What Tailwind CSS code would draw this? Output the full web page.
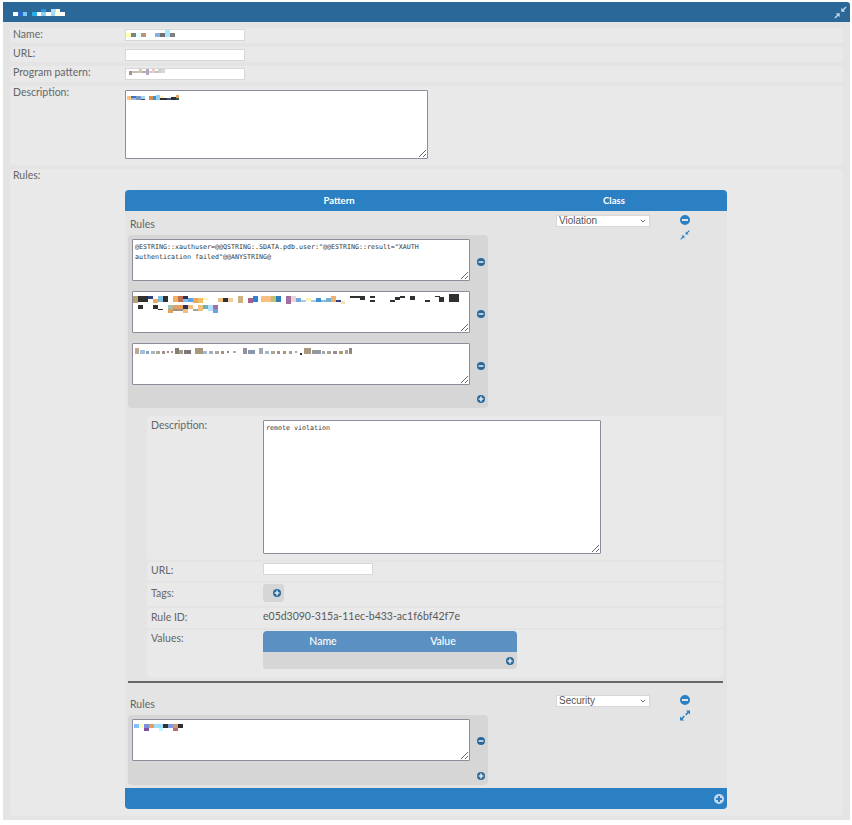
<!DOCTYPE html>
<html lang="en">
<head>
    <meta charset="UTF-8">
    <meta name="viewport" content="width=device-width, initial-scale=1.0">
    <script src="https://cdn.jsdelivr.net/npm/@tailwindcss/browser@4"></script>
    <title>Rule editor</title>
</head>
<body class="bg-white font-['Lato','Open_Sans',sans-serif] text-[10.5px] leading-[13px] text-[#666]">
    <div class="mt-[2px] ml-[3px] w-[847px]">
        <!-- title bar -->
        <div class="flex h-[20px] items-center justify-between rounded-tr-[3px] bg-[#2a6899] pr-[3px]">
            <svg width="52" height="7" viewBox="13 8 52 7" class="ml-[10px]" shape-rendering="crispEdges">
                <rect x="13" y="11" width="5" height="4" fill="#fff"/><rect x="18" y="11" width="5" height="4" fill="#2a6ad0"/><rect x="23" y="11" width="4" height="4" fill="#7cc8f0"/>
                <rect x="32" y="11" width="5" height="4" fill="#2ab0e8"/><rect x="37" y="11" width="4" height="4" fill="#fff"/><rect x="41" y="11" width="5" height="4" fill="#8cd0f8"/><rect x="46" y="11" width="5" height="4" fill="#fff"/><rect x="51" y="11" width="4" height="4" fill="#a0d8f8"/><rect x="55" y="11" width="5" height="4" fill="#fffde0"/><rect x="60" y="11" width="5" height="4" fill="#fff"/>
                <rect x="41" y="8" width="5" height="3" fill="#2a90d8"/><rect x="51" y="8" width="5" height="3" fill="#b0e0ff"/><rect x="56" y="8" width="4" height="3" fill="#fffde0"/>
            </svg>
            <svg width="13" height="13" viewBox="0 0 10 10" class="text-[#c4d6e6]">
                <path fill="currentColor" d="M5.6 4.4V1.4L6.7 2.5 8.9 .3 9.7 1.1 7.5 3.3 8.6 4.4ZM4.4 5.6V8.6L3.3 7.5 1.1 9.7 .3 8.9 2.5 6.7 1.4 5.6Z"/>
            </svg>
        </div>

        <div class="flex flex-col gap-[4px] bg-[#e4e4e4] px-[7px] pt-[6px] pb-[4px] w-[847px]">
            <div class="flex h-[15px] rounded-[3px] bg-[#e9e9e9]">
                <div class="w-[115px] pl-[3px]">Name:</div>
                <div class="relative pt-[1px]">
                    <input type="text" class="block h-[12px] w-[120px] border border-[#d7d7d7] bg-white">
                    <svg width="50" height="7" viewBox="126 30 50 7" class="absolute left-[1px] top-[2px]" shape-rendering="crispEdges">
                        <rect x="126" y="33" width="5" height="4" fill="#ffffb0"/><rect x="131" y="33" width="5" height="4" fill="#808080"/><rect x="136" y="33" width="5" height="4" fill="#e0ffff"/><rect x="141" y="33" width="5" height="4" fill="#c09078"/>
                        <rect x="155" y="33" width="5" height="4" fill="#88b0e0"/><rect x="160" y="33" width="5" height="4" fill="#707070"/><rect x="165" y="30" width="5" height="7" fill="#a8e8ff"/><rect x="170" y="33" width="5" height="4" fill="#808080"/>
                    </svg>
                </div>
            </div>
            <div class="flex h-[15px] rounded-[3px] bg-[#e9e9e9]">
                <div class="w-[115px] pl-[3px]">URL:</div>
                <div class="pt-[2px]"><input type="text" class="block h-[12px] w-[120px] border border-[#d7d7d7] bg-white"></div>
            </div>
            <div class="flex h-[16px] rounded-[3px] bg-[#e9e9e9]">
                <div class="w-[115px] pl-[3px]">Program pattern:</div>
                <div class="relative pt-[2px]">
                    <input type="text" class="block h-[12px] w-[120px] border border-[#d7d7d7] bg-white">
                    <svg width="37" height="6" viewBox="129 71 37 6" class="absolute left-[4px] top-[3px]" shape-rendering="crispEdges">
                        <rect x="129" y="73" width="3" height="4" fill="#a89090"/><rect x="132" y="73" width="7" height="2" fill="#c0c0b8"/><rect x="139" y="71" width="3" height="4" fill="#d8c8b0"/><rect x="142" y="73" width="4" height="2" fill="#b0b0a0"/><rect x="146" y="71" width="3" height="6" fill="#b0a8c0"/><rect x="149" y="73" width="3" height="2" fill="#d0d0d0"/><rect x="152" y="71" width="3" height="4" fill="#f0c8c8"/><rect x="155" y="73" width="3" height="2" fill="#c0c0c0"/><rect x="158" y="71" width="3" height="4" fill="#c8d0d8"/><rect x="161" y="71" width="4" height="4" fill="#d8d8d0"/>
                    </svg>
                </div>
            </div>
            <div class="flex h-[79px] rounded-[3px] bg-[#e9e9e9]">
                <div class="w-[115px] pl-[3px]">Description:</div>
                <div class="relative pt-[4px]">
                    <textarea class="block h-[69px] w-[303px] rounded-[1px] border border-[#8f8b9b] bg-white"></textarea>
                    <svg width="54" height="7" viewBox="127 95 54 7" class="absolute left-[2px] top-[9px]" shape-rendering="crispEdges">
                        <rect x="127" y="96" width="4" height="4" fill="#ffc080"/><rect x="131" y="96" width="5" height="2" fill="#4070c0"/><rect x="131" y="98" width="5" height="2" fill="#a0b8d8"/><rect x="136" y="96" width="5" height="4" fill="#7898c8"/><rect x="141" y="96" width="4" height="4" fill="#a0d8f0"/><rect x="141" y="99" width="4" height="1" fill="#604040"/>
                        <rect x="149" y="96" width="4" height="4" fill="#d09050"/><rect x="153" y="96" width="3" height="4" fill="#4090d0"/><rect x="156" y="94" width="4" height="6" fill="#90d0f8"/><rect x="160" y="98" width="7" height="2" fill="#303030"/><rect x="160" y="96" width="4" height="2" fill="#fff0c0"/><rect x="167" y="98" width="4" height="2" fill="#405090"/><rect x="171" y="97" width="5" height="3" fill="#303030"/><rect x="176" y="95" width="3" height="3" fill="#e8a060"/><rect x="176" y="98" width="3" height="2" fill="#305050"/>
                    </svg>
                </div>
            </div>

            <div class="flex rounded-[3px] bg-[#e9e9e9] pb-[7px]">
                <div class="w-[115px] pl-[3px]">Rules:</div>
                <div class="mt-[21px] w-[602px]">
                    <div class="flex h-[21px] items-center rounded-t-[4px] bg-[#2b80c4] text-[9.5px] font-bold text-white">
                        <div class="w-[428px] text-center">Pattern</div>
                        <div class="w-[122px] text-center">Class</div>
                    </div>

                    <div class="bg-[#e4e4e4]">
                        <!-- first rule -->
                        <div class="flex pt-[4px]">
                            <div class="w-[431px] pl-[3px]">
                                <div class="mt-[2px] mb-[4px] h-[14px] pl-[2px] leading-[14px]">Rules</div>
                                <div class="flex w-[360px] flex-col gap-[10px] rounded-[4px] bg-[#d6d6d6] pt-[4px] pb-[5px]">
                                    <div class="flex">
                                        <textarea class="ml-[4px] block h-[42px] w-[338px] rounded-[1px] border border-[#8f8b9b] bg-white px-[2px] py-[2px] font-['DejaVu_Sans_Mono',monospace] text-[6.65px] leading-[10px] text-[#333]">@ESTRING::xauthuser=@@QSTRING:.SDATA.pdb.user:"@@ESTRING::result="XAUTH authentication failed"@@ANYSTRING@</textarea>
                                        <svg width="8" height="8" viewBox="0 0 10 10" class="mt-[19px] ml-[7px] text-[#2a6899]"><circle cx="5" cy="5" r="5" fill="currentColor"/><rect x="2" y="4" width="6" height="2" fill="#dde6ee"/></svg>
                                    </div>
                                    <div class="flex">
                                        <div class="relative ml-[4px]">
                                            <textarea class="block h-[42px] w-[338px] rounded-[1px] border border-[#8f8b9b] bg-white"></textarea>
                                            <svg width="338" height="42" viewBox="36 318 1014 126" class="absolute left-0 top-0" shape-rendering="crispEdges">
                                                <rect x="38" y="333" width="15" height="22" fill="#b8a078"/><rect x="53" y="333" width="30" height="18" fill="#303030"/><rect x="83" y="333" width="15" height="8" fill="#304080"/><rect x="98" y="343" width="15" height="10" fill="#f0a860"/><rect x="113" y="333" width="15" height="18" fill="#80c0e0"/><rect x="128" y="333" width="15" height="18" fill="#303030"/>
                                                <rect x="158" y="333" width="15" height="18" fill="#f0b060"/><rect x="173" y="333" width="15" height="18" fill="#c07050"/><rect x="188" y="333" width="15" height="8" fill="#303050"/><rect x="188" y="341" width="15" height="10" fill="#80c0f0"/><rect x="203" y="338" width="15" height="13" fill="#60a0e0"/><rect x="218" y="338" width="15" height="17" fill="#e8a860"/><rect x="233" y="338" width="15" height="17" fill="#f0c060"/><rect x="248" y="338" width="15" height="8" fill="#fff0b0"/>
                                                <rect x="293" y="340" width="15" height="10" fill="#f0c080"/><rect x="308" y="340" width="15" height="10" fill="#303030"/><rect x="323" y="340" width="15" height="10" fill="#f0d0a0"/><rect x="353" y="333" width="15" height="22" fill="#d0b080"/>
                                                <rect x="383" y="340" width="15" height="15" fill="#a06090"/><rect x="398" y="333" width="15" height="18" fill="#3080d0"/><rect x="423" y="333" width="30" height="18" fill="#f8c080"/><rect x="453" y="333" width="15" height="18" fill="#c0c070"/><rect x="468" y="333" width="15" height="18" fill="#3080c0"/>
                                                <rect x="498" y="333" width="15" height="24" fill="#a070a0"/><rect x="513" y="333" width="15" height="18" fill="#f0d0d0"/><rect x="528" y="340" width="15" height="10" fill="#70a8e0"/><rect x="543" y="344" width="15" height="6" fill="#a0d0f0"/><rect x="558" y="340" width="15" height="8" fill="#fff0b0"/><rect x="573" y="344" width="15" height="6" fill="#a0d0f0"/><rect x="588" y="340" width="15" height="10" fill="#4090d8"/><rect x="603" y="344" width="15" height="6" fill="#80b8e0"/><rect x="618" y="340" width="15" height="10" fill="#70b0d8"/><rect x="633" y="333" width="15" height="17" fill="#f0b070"/><rect x="648" y="345" width="15" height="6" fill="#304080"/><rect x="663" y="348" width="12" height="8" fill="#f8e0b0"/>
                                                <rect x="690" y="333" width="45" height="5" fill="#303030"/><rect x="720" y="338" width="15" height="7" fill="#303030"/><rect x="750" y="333" width="15" height="6" fill="#303030"/><rect x="750" y="344" width="15" height="6" fill="#303030"/><rect x="810" y="344" width="15" height="6" fill="#303030"/><rect x="825" y="337" width="15" height="7" fill="#303030"/><rect x="840" y="333" width="15" height="5" fill="#303030"/><rect x="870" y="333" width="15" height="12" fill="#303030"/><rect x="915" y="344" width="15" height="6" fill="#303030"/><rect x="945" y="333" width="15" height="4" fill="#303030"/><rect x="957" y="337" width="15" height="14" fill="#303030"/><rect x="988" y="327" width="30" height="24" fill="#303030"/>
                                                <rect x="53" y="360" width="15" height="12" fill="#303030"/><rect x="98" y="360" width="15" height="12" fill="#303030"/><rect x="113" y="371" width="15" height="5" fill="#303030"/><rect x="143" y="360" width="15" height="12" fill="#a0c0b0"/><rect x="143" y="372" width="15" height="12" fill="#e0a060"/><rect x="158" y="360" width="30" height="12" fill="#e8a060"/><rect x="158" y="372" width="30" height="5" fill="#a09080"/><rect x="188" y="360" width="15" height="12" fill="#303060"/><rect x="188" y="372" width="15" height="12" fill="#f0c080"/><rect x="203" y="360" width="15" height="12" fill="#f0c080"/><rect x="218" y="372" width="15" height="5" fill="#a0a0a0"/><rect x="233" y="360" width="15" height="17" fill="#f0c080"/><rect x="248" y="360" width="15" height="12" fill="#70b0b0"/><rect x="263" y="360" width="15" height="17" fill="#b0e0ff"/><rect x="278" y="360" width="15" height="12" fill="#a070a0"/><rect x="278" y="372" width="15" height="12" fill="#70a0e0"/>
                                            </svg>
                                        </div>
                                        <svg width="8" height="8" viewBox="0 0 10 10" class="mt-[19px] ml-[7px] text-[#2a6899]"><circle cx="5" cy="5" r="5" fill="currentColor"/><rect x="2" y="4" width="6" height="2" fill="#dde6ee"/></svg>
                                    </div>
                                    <div class="flex">
                                        <div class="relative ml-[4px]">
                                            <textarea class="block h-[42px] w-[338px] rounded-[1px] border border-[#8f8b9b] bg-white"></textarea>
                                            <svg width="338" height="42" viewBox="36 474 1014 126" class="absolute left-0 top-0" shape-rendering="crispEdges">
                                                <rect x="45" y="488" width="12" height="20" fill="#c0a890"/><rect x="60" y="496" width="15" height="10" fill="#a0c0e0"/><rect x="78" y="498" width="10" height="8" fill="#90a0b0"/><rect x="93" y="498" width="12" height="8" fill="#a0b8d0"/><rect x="108" y="498" width="12" height="8" fill="#b0a890"/><rect x="125" y="498" width="10" height="8" fill="#a09090"/><rect x="140" y="498" width="8" height="6" fill="#b08060"/><rect x="152" y="498" width="8" height="6" fill="#a0a0a0"/>
                                                <rect x="165" y="488" width="12" height="18" fill="#808070"/><rect x="178" y="496" width="12" height="10" fill="#a0a090"/><rect x="192" y="496" width="22" height="10" fill="#807878"/>
                                                <rect x="224" y="488" width="24" height="18" fill="#a89880"/><rect x="250" y="498" width="12" height="8" fill="#a0b8d0"/><rect x="268" y="498" width="12" height="8" fill="#a0b0c0"/><rect x="285" y="498" width="12" height="8" fill="#b0a890"/><rect x="302" y="498" width="10" height="8" fill="#a09090"/><rect x="320" y="498" width="8" height="6" fill="#b08060"/><rect x="340" y="498" width="8" height="6" fill="#b0b0b0"/>
                                                <rect x="368" y="488" width="14" height="18" fill="#9090a0"/><rect x="384" y="496" width="20" height="10" fill="#8898a8"/>
                                                <rect x="416" y="488" width="14" height="18" fill="#a0a8b8"/><rect x="435" y="498" width="12" height="8" fill="#a0b8d0"/><rect x="452" y="498" width="12" height="8" fill="#b0a890"/><rect x="470" y="498" width="10" height="8" fill="#a09090"/><rect x="488" y="498" width="10" height="8" fill="#b09070"/><rect x="506" y="498" width="10" height="8" fill="#a0a0a0"/><rect x="524" y="498" width="8" height="6" fill="#b0a090"/><rect x="540" y="504" width="5" height="5" fill="#303030"/>
                                                <rect x="552" y="488" width="22" height="18" fill="#a89880"/><rect x="576" y="496" width="26" height="10" fill="#9098a0"/><rect x="606" y="498" width="10" height="8" fill="#a0a8b0"/><rect x="622" y="498" width="10" height="8" fill="#b0a090"/><rect x="640" y="498" width="10" height="8" fill="#909098"/><rect x="658" y="498" width="12" height="8" fill="#b09870"/><rect x="676" y="496" width="8" height="10" fill="#a0a0a0"/><rect x="686" y="488" width="10" height="18" fill="#908878"/>
                                            </svg>
                                        </div>
                                        <svg width="8" height="8" viewBox="0 0 10 10" class="mt-[19px] ml-[7px] text-[#2a6899]"><circle cx="5" cy="5" r="5" fill="currentColor"/><rect x="2" y="4" width="6" height="2" fill="#dde6ee"/></svg>
                                    </div>
                                    <div class="flex justify-end pr-[3px]">
                                        <svg width="8" height="8" viewBox="0 0 10 10" class="text-[#2a6899]"><circle cx="5" cy="5" r="5" fill="currentColor"/><path d="M4 2h2v2h2v2H6v2H4V6H2V4h2z" fill="#dde6ee"/></svg>
                                    </div>
                                </div>
                            </div>
                            <div class="w-[124px]">
                                <div class="relative w-[94px]">
                                    <select class="block h-[12px] w-[94px] appearance-none border border-[#d7d7d7] bg-white pl-[2px] font-['Liberation_Sans',sans-serif] text-[10px] leading-[10px] text-[#555]"><option>Violation</option></select>
                                    <svg width="6" height="4" viewBox="0 0 6 4" class="absolute right-[4px] top-[4px]"><path d="M.8 .8 3 3 5.2 .8" fill="none" stroke="#777" stroke-width="1"/></svg>
                                </div>
                            </div>
                            <div class="flex w-[10px] flex-col gap-[5px]">
                                <svg width="10" height="10" viewBox="0 0 10 10" class="text-[#2b80c4]"><circle cx="5" cy="5" r="5" fill="currentColor"/><rect x="2" y="4" width="6" height="2" fill="#e4e4e4"/></svg>
                                <svg width="10" height="10" viewBox="0 0 10 10" class="text-[#2b80c4]"><path fill="currentColor" d="M5.6 4.4V1.4L6.7 2.5 8.9 .3 9.7 1.1 7.5 3.3 8.6 4.4ZM4.4 5.6V8.6L3.3 7.5 1.1 9.7 .3 8.9 2.5 6.7 1.4 5.6Z"/></svg>
                            </div>
                        </div>

                        <!-- details of first rule -->
                        <div class="mt-[8px] ml-[22px] flex w-[576px] flex-col gap-[2px]">
                            <div class="flex h-[144px] rounded-[3px] bg-[#e9e9e9] pt-[3px]">
                                <div class="w-[116px] pl-[4px]">Description:</div>
                                <div class="pt-[1px]"><textarea class="block h-[134px] w-[338px] rounded-[1px] border border-[#8f8b9b] bg-white px-[2px] py-[2px] font-['DejaVu_Sans_Mono',monospace] text-[6.65px] leading-[10px] text-[#333]">remote violation</textarea></div>
                            </div>
                            <div class="flex h-[19px] rounded-[3px] bg-[#e9e9e9] pt-[2px]">
                                <div class="w-[116px] pl-[4px]">URL:</div>
                                <div class="-mt-[1px]"><input type="text" class="block h-[12px] w-[110px] border border-[#d7d7d7] bg-white"></div>
                            </div>
                            <div class="flex h-[23px] rounded-[3px] bg-[#e9e9e9] pt-[1px]">
                                <div class="w-[116px] pl-[4px] pt-[3px]">Tags:</div>
                                <div class="flex h-[18px] w-[21px] items-center justify-end rounded-[3px] bg-[#d6d6d6] pr-[3px]">
                                    <svg width="8" height="8" viewBox="0 0 10 10" class="text-[#2a6899]"><circle cx="5" cy="5" r="5" fill="currentColor"/><path d="M4 2h2v2h2v2H6v2H4V6H2V4h2z" fill="#dde6ee"/></svg>
                                </div>
                            </div>
                            <div class="flex h-[20px] rounded-[3px] bg-[#e9e9e9] pt-[3px]">
                                <div class="w-[116px] pl-[4px]">Rule ID:</div>
                                <div class="-mt-[1px] text-[#5a5a5a]">e05d3090-315a-11ec-b433-ac1f6bf42f7e</div>
                            </div>
                            <div class="flex h-[47px] rounded-[3px] bg-[#e9e9e9] pt-[1px]">
                                <div class="w-[116px] pl-[4px] pt-[1px]">Values:</div>
                                <div class="w-[254px]">
                                    <div class="flex h-[21px] items-center rounded-t-[4px] bg-[#5a90c2] text-[#fff]">
                                        <div class="w-[120px] text-center font-medium">Name</div>
                                        <div class="w-[120px] text-center font-medium">Value</div>
                                    </div>
                                    <div class="flex h-[17px] items-center justify-end rounded-b-[4px] bg-[#d6d6d6] pr-[3px]">
                                        <svg width="8" height="8" viewBox="0 0 10 10" class="text-[#2a6899]"><circle cx="5" cy="5" r="5" fill="currentColor"/><path d="M4 2h2v2h2v2H6v2H4V6H2V4h2z" fill="#dde6ee"/></svg>
                                    </div>
                                </div>
                            </div>
                        </div>

                        <div class="mt-[4px] ml-[3px] h-[2px] w-[595px] bg-[#666]"></div>

                        <!-- second rule -->
                        <div class="flex pt-[12px]">
                            <div class="w-[431px] pl-[3px]">
                                <div class="mt-[2px] mb-[4px] h-[14px] pl-[2px] leading-[14px]">Rules</div>
                                <div class="flex w-[360px] flex-col gap-[11px] rounded-[4px] bg-[#d6d6d6] pt-[4px] pb-[5px]">
                                    <div class="flex">
                                        <div class="relative ml-[4px]">
                                            <textarea class="block h-[42px] w-[338px] rounded-[1px] border border-[#8f8b9b] bg-white"></textarea>
                                            <svg width="338" height="42" viewBox="36 120 1014 126" class="absolute left-0 top-0" shape-rendering="crispEdges">
                                                <rect x="42" y="135" width="15" height="11" fill="#80c0ff"/><rect x="57" y="135" width="15" height="11" fill="#ffffc0"/><rect x="72" y="135" width="15" height="11" fill="#8090e0"/><rect x="87" y="135" width="15" height="11" fill="#e0a060"/><rect x="102" y="135" width="27" height="11" fill="#a0e0ff"/><rect x="129" y="135" width="15" height="11" fill="#303030"/><rect x="144" y="135" width="15" height="11" fill="#8098e0"/><rect x="159" y="135" width="15" height="11" fill="#d09878"/><rect x="174" y="135" width="15" height="11" fill="#303030"/>
                                                <rect x="72" y="146" width="15" height="10" fill="#8050a0"/><rect x="117" y="146" width="12" height="10" fill="#c0f8ff"/><rect x="159" y="146" width="15" height="10" fill="#b07070"/>
                                            </svg>
                                        </div>
                                        <svg width="8" height="8" viewBox="0 0 10 10" class="mt-[18px] ml-[7px] text-[#2a6899]"><circle cx="5" cy="5" r="5" fill="currentColor"/><rect x="2" y="4" width="6" height="2" fill="#dde6ee"/></svg>
                                    </div>
                                    <div class="flex justify-end pr-[3px]">
                                        <svg width="8" height="8" viewBox="0 0 10 10" class="text-[#2a6899]"><circle cx="5" cy="5" r="5" fill="currentColor"/><path d="M4 2h2v2h2v2H6v2H4V6H2V4h2z" fill="#dde6ee"/></svg>
                                    </div>
                                </div>
                            </div>
                            <div class="w-[124px]">
                                <div class="relative w-[94px]">
                                    <select class="block h-[12px] w-[94px] appearance-none border border-[#d7d7d7] bg-white pl-[2px] font-['Liberation_Sans',sans-serif] text-[10px] leading-[10px] text-[#555]"><option>Security</option></select>
                                    <svg width="6" height="4" viewBox="0 0 6 4" class="absolute right-[4px] top-[4px]"><path d="M.8 .8 3 3 5.2 .8" fill="none" stroke="#777" stroke-width="1"/></svg>
                                </div>
                            </div>
                            <div class="flex w-[10px] flex-col gap-[5px]">
                                <svg width="10" height="10" viewBox="0 0 10 10" class="text-[#2b80c4]"><circle cx="5" cy="5" r="5" fill="currentColor"/><rect x="2" y="4" width="6" height="2" fill="#e4e4e4"/></svg>
                                <svg width="10" height="11" viewBox="0 0 10 10" class="text-[#2b80c4]"><path fill="currentColor" d="M10 0V4L8.6 2.6 6.3 4.9 5.1 3.7 7.4 1.4 6 0ZM0 10V6L1.4 7.4 3.7 5.1 4.9 6.3 2.6 8.6 4 10Z"/></svg>
                            </div>
                        </div>
                        <div class="h-[3px]"></div>
                    </div>

                    <div class="flex h-[21px] items-center justify-end rounded-b-[4px] bg-[#2b80c4] pr-[3px]">
                        <svg width="10" height="10" viewBox="0 0 10 10" class="text-[#c6d9ec]"><circle cx="5" cy="5" r="5" fill="currentColor"/><path d="M4 2h2v2h2v2H6v2H4V6H2V4h2z" fill="#2b80c4"/></svg>
                    </div>
                </div>
            </div>
        </div>
    </div>
</body>
</html>
